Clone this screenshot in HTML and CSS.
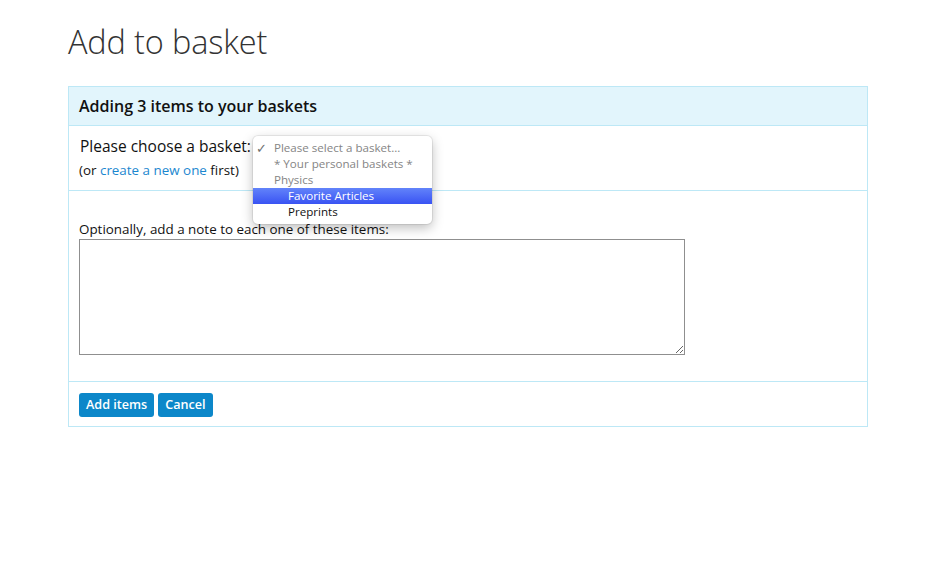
FILE: index.html
```html
<!DOCTYPE html>
<html lang="en">
<head>
<meta charset="utf-8">
<title>Add to basket</title>
<link rel="stylesheet" href="styles.css">
</head>
<body>
<div class="page">
  <h1 class="title">Add to basket</h1>
  <div class="panel">
    <div class="panel-heading">Adding 3 items to your baskets</div>
    <div class="panel-row choose">
      <div class="choose-line">
        <span class="choose-label">Please choose a basket:</span>
        <span class="select-wrap">
          <span class="select-box" aria-hidden="true"></span>
          <div class="popup">
            <div class="opt muted"><span class="check">✓</span>Please select a basket...</div>
            <div class="opt muted">* Your personal baskets *</div>
            <div class="opt muted">Physics</div>
            <div class="opt child selected">Favorite Articles</div>
            <div class="opt child">Preprints</div>
          </div>
        </span>
      </div>
      <div class="choose-note">(or <a href="#" class="link">create a new one</a> first)</div>
    </div>
    <div class="panel-row note">
      <label class="note-label">Optionally, add a note to each one of these items:</label>
      <textarea class="note-area"></textarea>
    </div>
    <div class="panel-row actions">
      <button class="btn">Add items</button>
      <button class="btn">Cancel</button>
    </div>
  </div>
</div>
</body>
</html>
```
FILE: styles.css
```css
html, body {
  margin: 0;
  padding: 0;
  background: #ffffff;
}
body {
  font-family: "Open Sans", "Liberation Sans", sans-serif;
  color: #111;
}
.page {
  padding: 22px 0 0 68px;
  width: 800px;
}
.title {
  margin: 0 0 24px 0;
  font-size: 32.5px;
  line-height: 40px;
  font-weight: 300;
  color: #333;
  letter-spacing: -0.15px;
}
.panel {
  border: 1px solid #bde8f6;
}
.panel-heading {
  background: #e2f5fc;
  border-bottom: 1px solid #bde8f6;
  padding: 8px 10px;
  font-size: 16px;
  line-height: 22px;
  font-weight: 600;
  color: #111;
}
.panel-row {
  padding: 0 10px;
  border-bottom: 1px solid #bde8f6;
}
.panel-row:last-child {
  border-bottom: 0;
}
.choose {
  padding-top: 9px;
  padding-bottom: 10px;
}
.choose-line {
  display: flex;
  align-items: center;
  height: 22px;
  font-size: 15.5px;
  line-height: 22px;
  margin-bottom: 3px;
}
.choose-label {
  padding-left: 1px;
}
.select-wrap {
  position: relative;
  margin-left: 2px;
}
.select-box {
  display: inline-block;
  width: 170px;
  height: 18px;
  vertical-align: middle;
}
.popup {
  position: absolute;
  left: 0;
  top: 1px;
  width: 179px;
  padding: 4px 0;
  background: #fff;
  border-radius: 5px;
  box-shadow: 0 0 0 1px rgba(0,0,0,0.07), 0 4px 12px rgba(0,0,0,0.26);
  font-size: 11.6px;
  z-index: 5;
}
.opt {
  height: 16px;
  line-height: 16px;
  padding-left: 21px;
  color: #111;
  position: relative;
  white-space: nowrap;
}
.opt.muted {
  color: #858585;
}
.opt.child {
  padding-left: 35px;
}
.opt.selected {
  background: linear-gradient(#6283fa, #3953f3);
  color: #fff;
}
.check {
  position: absolute;
  left: 3px;
  top: 0;
  font-size: 13px;
  color: #6f6f6f;
}
.choose-note {
  font-size: 13.4px;
  line-height: 20px;
}
.link {
  color: #1b87cf;
  text-decoration: none;
}
.note {
  padding-top: 29px;
  padding-bottom: 26px;
}
.note-label {
  display: block;
  font-size: 13.4px;
  line-height: 18px;
  margin-bottom: 1px;
}
.note-area {
  display: block;
  box-sizing: border-box;
  width: 606px;
  height: 116px;
  margin: 0;
  border: 1px solid #8f8f8f;
  font-family: "Open Sans", sans-serif;
}
.actions {
  padding-top: 11px;
  padding-bottom: 9px;
  display: flex;
  gap: 4px;
}
.btn {
  height: 24px;
  padding: 0 7px;
  border: 0;
  border-radius: 3px;
  background: #0c87c9;
  color: #fff;
  font-family: "Open Sans", sans-serif;
  font-size: 12.6px;
  font-weight: 600;
  line-height: 24px;
}
```
